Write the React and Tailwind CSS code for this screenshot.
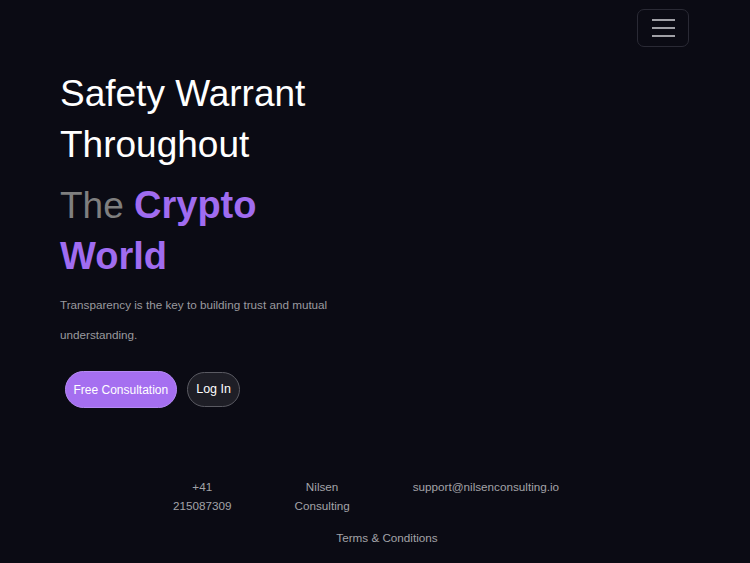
export default function App() {
  return (
    <div className="min-h-screen w-full bg-[#0b0b14] font-['Liberation_Sans',Arial,sans-serif]">
      <header className="flex justify-end pt-[9px] pr-[61px]">
        <button className="flex h-[38px] w-[52px] flex-col items-center justify-center gap-[6px] rounded-[7px] border border-[#2a2a35] bg-transparent">
          <span className="block h-[2px] w-[23px] bg-[#a0a0a6]" />
          <span className="block h-[2px] w-[23px] bg-[#a0a0a6]" />
          <span className="block h-[2px] w-[23px] bg-[#a0a0a6]" />
        </button>
      </header>

      <main className="mt-[21px] pl-[60px]">
        <div className="w-[290px]">
          <h1 className="text-[37px] leading-[51px] font-normal text-white">
            Safety Warrant Throughout
          </h1>
          <h2 className="mt-[10px] text-[37px] leading-[51px] font-normal text-[#7f7f7f]">
            The{" "}
            <span className="text-[38px] font-bold text-[#a06cf0]">Crypto World</span>
          </h2>
          <p className="mt-[8px] text-[11.7px] leading-[30px] text-[#9a9a9f]">
            Transparency is the key to building trust and mutual understanding.
          </p>
        </div>
        <div className="mt-[21px] flex items-center gap-[10px] pl-[5px]">
          <button className="h-[37px] rounded-full border border-[#b58af5] bg-[#a56ff0] px-[7.5px] text-[12px] text-white">
            Free Consultation
          </button>
          <button className="h-[35px] rounded-full border border-[#5a5a62] bg-[#1e1e26] px-[8.5px] text-[12.5px] text-white">
            Log In
          </button>
        </div>
      </main>

      <footer className="mt-[69px] ml-[173px] w-[428px] pb-[16px]">
        <div className="flex items-start gap-[63px] text-[11.7px] leading-[19px] text-[#a3a3a8]">
          <div className="w-min text-center">+41 215087309</div>
          <div className="w-min text-center">Nilsen Consulting</div>
          <div className="w-min text-center">support@nilsenconsulting.io</div>
        </div>
        <div className="mt-[13px] text-center text-[11.7px] leading-[19px] text-[#a3a3a8]">
          Terms &amp; Conditions
        </div>
      </footer>
    </div>
  );
}
